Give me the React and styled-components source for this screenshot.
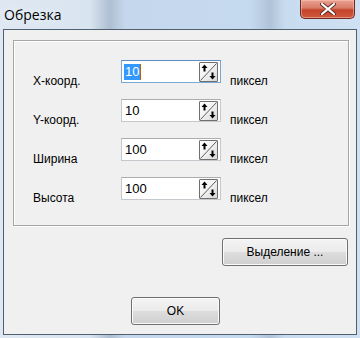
import React from 'react'
import styled, { createGlobalStyle } from 'styled-components'

const Global = createGlobalStyle`
  html, body {
    margin: 0;
    padding: 0;
    background: #c9dbee;
  }
  * { box-sizing: border-box; }
`

const Frame = styled.div`
  width: 360px;
  height: 338px;
  display: flex;
  flex-direction: column;
  padding: 0 3px 3px 3px;
  font-family: "Liberation Sans", Arial, sans-serif;
  background:
    linear-gradient(90deg,
      #dfe8f2 0px, #d8e4f0 90px, #aebfd2 110px, #c4d7ec 125px,
      #c6daef 250px, #b0c3d8 270px, #c8dcf0 285px, #cfe0f2 360px);
`

const TitleBar = styled.div`
  height: 29px;
  display: flex;
  justify-content: space-between;
  align-items: flex-start;
`

const Title = styled.div`
  font-family: "Open Sans", "Noto Sans", sans-serif;
  font-size: 14px;
  color: #000;
  padding: 5px 0 0 1px;
  text-shadow: 0 0 8px rgba(255, 255, 255, 0.9);
`

const CloseButton = styled.div`
  width: 55px;
  height: 19px;
  margin-right: 2px;
  border: 1px solid #6b2a22;
  border-top: none;
  border-radius: 0 0 5px 5px;
  background: linear-gradient(180deg, #e9a293 0%, #d97a66 45%, #c4432a 55%, #cf5a3c 100%);
  box-shadow: inset 0 0 0 1px rgba(255, 200, 190, 0.5);
  display: flex;
  align-items: center;
  justify-content: center;
`

const Client = styled.div`
  flex: 1;
  display: flex;
  flex-direction: column;
  border: 1px solid #4f6071;
  background: #f0f0f0;
  padding: 10px 7px 0 9px;
`

const GroupBox = styled.div`
  height: 186px;
  border: 1px solid #a6a6a6;
  box-shadow: inset 1px 1px 0 #fff, 1px 1px 0 #fff;
  padding: 19px 0 0 19px;
  display: grid;
  grid-template-columns: 88px 100px auto;
  grid-auto-rows: 39px;
  align-content: start;
`

const Label = styled.div`
  font-size: 12px;
  color: #000;
  padding-top: 14px;
`

const Unit = styled(Label)`
  padding-left: 9px;
`

const Field = styled.div`
  height: 23px;
  display: flex;
  align-items: center;
  justify-content: space-between;
  background: #fff;
  border: 1px solid ${p => (p.focused ? '#7aa7d6' : '#c5c8cc')};
  border-top-color: ${p => (p.focused ? '#5c8cc4' : '#abadb3')};
  padding: 0 2px 0 2px;
`

const Value = styled.span`
  font-size: 13px;
  line-height: 16px;
  color: ${p => (p.selected ? '#fff' : '#000')};
  background: ${p => (p.selected ? '#3399ff' : 'transparent')};
  padding: 0 1px;
  border-right: ${p => (p.selected ? '1px solid #c06000' : 'none')};
`

const Spin = styled.div`
  width: 19px;
  height: 20px;
  border: 1px solid #6f6f6f;
  border-radius: 1px;
  background: linear-gradient(135deg, #ffffff 0%, #f2f2f2 50%, #d6d6d6 100%);
  display: flex;
`

const ButtonRow = styled.div`
  display: flex;
  justify-content: ${p => p.align || 'flex-end'};
  padding: ${p => p.pad || '0 1px 0 0'};
  margin-top: ${p => p.top}px;
`

const Button = styled.div`
  width: ${p => p.w}px;
  height: 28px;
  border: 1px solid #707070;
  border-radius: 3px;
  background: linear-gradient(180deg, #f4f4f4 0%, #ebebeb 48%, #dddddd 52%, #cfcfcf 100%);
  box-shadow: inset 0 0 0 1px #fbfbfb;
  display: flex;
  align-items: center;
  justify-content: center;
  font-size: 12px;
  color: #000;
`

const SpinIcon = () => (
  <svg width="17" height="18" viewBox="0 0 17 18">
    <line x1="0.5" y1="17.5" x2="16.5" y2="0.5" stroke="#5e5e5e" strokeWidth="1" />
    <path d="M4.5 1.5 L1.5 5 H3.5 V8.5 H5.5 V5 H7.5 Z" fill="#000" />
    <path d="M12.5 16.5 L9.5 13 H11.5 V9.5 H13.5 V13 H15.5 Z" fill="#000" />
  </svg>
)

const CloseIcon = () => (
  <svg width="16" height="12" viewBox="0 0 16 12">
    <path
      d="M2 1 L8 6 L14 1 M2 11 L8 6 L14 11"
      stroke="#5a2a22"
      strokeWidth="4"
      fill="none"
      strokeLinecap="round"
    />
    <path
      d="M2 1 L8 6 L14 1 M2 11 L8 6 L14 11"
      stroke="#fff"
      strokeWidth="2.2"
      fill="none"
      strokeLinecap="round"
    />
  </svg>
)

const rows = [
  { label: 'X-коорд.', value: '10', focused: true },
  { label: 'Y-коорд.', value: '10' },
  { label: 'Ширина', value: '100' },
  { label: 'Высота', value: '100' },
]

const App = () => {
  return (
    <>
      <Global />
      <Frame>
        <TitleBar>
          <Title>Обрезка</Title>
          <CloseButton>
            <CloseIcon />
          </CloseButton>
        </TitleBar>
        <Client>
          <GroupBox>
            {rows.map(r => (
              <React.Fragment key={r.label}>
                <Label>{r.label}</Label>
                <Field focused={r.focused}>
                  <Value selected={r.focused}>{r.value}</Value>
                  <Spin>
                    <SpinIcon />
                  </Spin>
                </Field>
                <Unit>пиксел</Unit>
              </React.Fragment>
            ))}
          </GroupBox>
          <ButtonRow top={12}>
            <Button w={126}>Выделение ...</Button>
          </ButtonRow>
          <ButtonRow top={31} align="flex-start" pad="0 0 0 118px">
            <Button w={89}>OK</Button>
          </ButtonRow>
        </Client>
      </Frame>
    </>
  )
}

export default App
